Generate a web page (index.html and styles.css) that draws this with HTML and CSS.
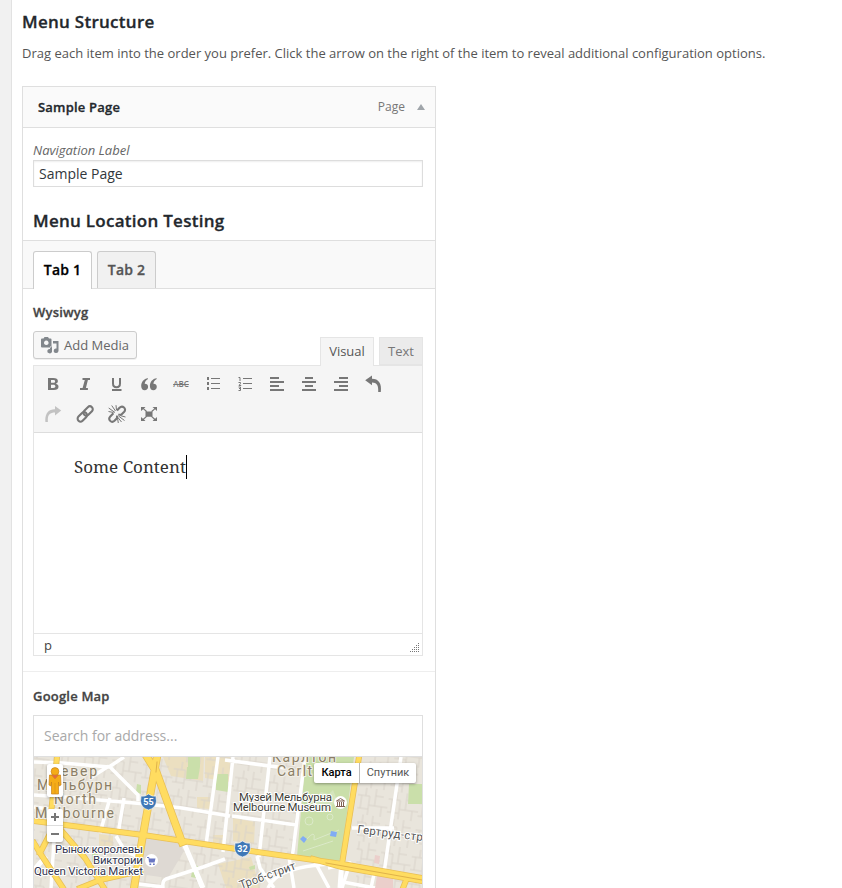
FILE: index.html
```html
<!DOCTYPE html>
<html lang="en">
<head>
<meta charset="utf-8">
<title>Menu Structure</title>
<link rel="stylesheet" href="styles.css">
</head>
<body>
<main class="panel">
  <h1 class="title">Menu Structure</h1>
  <p class="intro"><span>Drag each item into the order you prefer. Click the arrow on the right of the item to reveal additional configuration options.</span></p>
  <section class="item">
    <header class="item-bar"><strong>Sample Page</strong><span class="item-type">Page</span><i class="arrow"></i></header>
    <div class="nav-label">
      <label for="nav">Navigation Label</label>
      <input id="nav" type="text" value="Sample Page">
    </div>
    <h2 class="group-title">Menu Location Testing</h2>
    <div class="tabs"><a class="tab active">Tab 1</a><a class="tab">Tab 2</a></div>
    <div class="field wysiwyg">
      <div class="field-label">Wysiwyg</div>
      <div class="editor-top">
        <button class="media">
          <svg width="18" height="17" viewBox="0 0 18 17"><path fill="#82878c" fill-rule="evenodd" d="M1 1.500h1.500L3.500 0H7l1 1.500h1.500q1 0 1 1v7q0 1-1 1H1q-1 0-1-1v-7q0-1 1-1zM5.300 3.500a2.300 2.300 0 1 0 .01 0zM12 4h5.500v10a2.400 2.200 0 1 1-2-2.400V6.500H12zM9 12v-2.500h2v5.200a2.400 2.200 0 1 1-2-2.700z"/></svg>
          <span>Add Media</span>
        </button>
        <div class="modes"><a class="mode active">Visual</a><a class="mode">Text</a></div>
      </div>
      <div class="editor">
        <div class="toolbar">
          <span class="tool"><svg viewBox="0 0 20 20"><path fill-rule="evenodd" d="M5 4h5.200c3.200 0 4.700 1.100 4.700 3 0 1.400-.8 2.400-2.100 2.700 1.600.4 2.700 1.300 2.700 3 0 2.100-1.700 3.300-4.600 3.300H5zM8 6v2.800H10c1.500 0 2.100-.4 2.100-1.400S11.500 6 10 6zm0 4.700V14h2.200c1.500 0 2.200-.6 2.200-1.700s-.7-1.600-2.200-1.600z"/></svg></span>
          <span class="tool"><svg viewBox="0 0 20 20"><path d="M7.500 4H15v2h-2.100L10.900 14h2v2H5v-2h2.600L9.800 6H7.500z"/></svg></span>
          <span class="tool"><svg viewBox="0 0 20 20"><path d="M5 4h2v5.500q0 2.700 2.500 2.700t2.500-2.700V4h2v5.500q0 4.700-4.500 4.700T5 9.500zM5 15h9.500v2H5z"/></svg></span>
          <span class="tool"><svg viewBox="0 0 20 20"><path d="M9 5v-.8C4.700 4.700 2.200 8 2.200 12c0 2.800 1.400 4.200 3.500 4.200 1.900 0 3.400-1.400 3.400-3.400S7.700 9.600 5.700 9.700C6 7.700 6.900 6.200 9 5zM17.700 5v-.8c-4.300.5-6.800 3.800-6.800 7.800 0 2.800 1.400 4.200 3.500 4.200 1.900 0 3.400-1.400 3.400-3.400s-1.400-3.200-3.400-3.100C14.700 7.700 15.600 6.200 17.700 5z"/></svg></span>
          <span class="tool"><b class="strike">ABC</b></span>
          <span class="tool"><svg viewBox="0 0 20 20"><path d="M8 4h9v1H8zM8 9h9v1H8zM8 14h9v1H8zM4 3h2v3H4zM4 8h2v3H4zM4 13h2v3H4z"/></svg></span>
          <span class="tool"><svg viewBox="0 0 20 20"><path d="M8 4h9v1H8zM8 9h9v1H8zM8 14h9v1H8z"/><path class="line" d="M3.500 3.500h1.500v3.500M3.500 8.500h2v1L4 11.500h2.200M3.500 13h2v1.500H4h1.500V16.500h-2"/></svg></span>
          <span class="tool"><svg viewBox="0 0 20 20"><path d="M3 3h9v2H3zM3 7h14v2H3zM3 11h9v2H3zM3 15h14v2H3z"/></svg></span>
          <span class="tool"><svg viewBox="0 0 20 20"><path d="M6 3h8v2H6zM3 7h14v2H3zM6 11h8v2H6zM3 15h14v2H3z"/></svg></span>
          <span class="tool"><svg viewBox="0 0 20 20"><path d="M8 3h9v2H8zM3 7h14v2H3zM8 11h9v2H8zM3 15h14v2H3z"/></svg></span>
          <span class="tool"><svg viewBox="0 0 20 20"><path d="M9 1.500v3.200c6.500 0 10 4.700 8.800 13.300h-2.600c.5-6.600-1.500-9.500-6.200-9.500v2.800L2.200 6.300z"/></svg></span>
          <span class="tool faded"><svg viewBox="0 0 20 20"><path d="M12 2v3.200C5.500 5 1.600 9.800 2.400 18h2.500C4.300 11.500 6.500 8.600 12 8.600v2.900l6.200-5z"/></svg></span>
          <span class="tool"><svg viewBox="0 0 20 20"><g class="chain"><rect x="-5.400" y="-2.900" width="10.800" height="5.800" rx="2.900" transform="translate(13.100 7) rotate(-45)"/><rect x="-5.400" y="-2.900" width="10.800" height="5.800" rx="2.900" transform="translate(7.300 12.900) rotate(-45)"/></g></svg></span>
          <span class="tool"><svg viewBox="0 0 20 20"><g class="chain"><path d="M10 6.500l2.500-2.700c3-3 7.400.9 4.700 4l-2.700 2.700-3.200.2M6.400 9.300l-3.100 3.200c-2.800 3 1.100 7.200 4.200 4.300l2.400-2.500.2-2.700"/></g><path class="line" d="M1.700 4L8 8.500M4.700 1.500L8.500 7M9 1.200l.5 5M1.500 7.500l5 1M11.500 12l6 4.500M13 11.500l5.500 1.500M10.500 13l4 5M10.500 14l.8 5"/></svg></span>
          <span class="tool"><svg viewBox="0 0 20 20"><path d="M6.500 7.500h7v5.200h-7zM2 3h4.500L5 4.500l3 2.600-.8.8-3-2.600L2 7zM18 3v4l-1.900-1.800-3 2.700-.8-.8 3-2.600L13.500 3zM2 17v-4l2 1.700 3.200-2.700.8.8-3 2.700L6.500 17zM18 17h-4.500l1.500-1.500-2.900-2.700.8-.8 3.200 2.700 1.900-1.700z"/></svg></span>
        </div>
        <div class="content"><span class="written">Some Content</span></div>
        <div class="status"><span>p</span><svg width="10" height="10" viewBox="0 0 10 10"><path d="M9 0h1v1H9zM7 2h1v1H7zm2 0h1v1H9zM5 4h1v1H5zm2 0h1v1H7zm2 0h1v1H9zM3 6h1v1H3zm2 0h1v1H5zm2 0h1v1H7zm2 0h1v1H9zM1 8h1v1H1zm2 0h1v1H3zm2 0h1v1H5zm2 0h1v1H7zm2 0h1v1H9z"/></svg></div>
      </div>
    </div>
    <div class="field map-field">
      <div class="field-label">Google Map</div>
      <div class="map-box">
        <input class="search" type="text" placeholder="Search for address...">
        <div class="map">
          <svg class="tiles" width="388" height="131" viewBox="34 757 388 131">
            <defs>
              <pattern id="lots" width="31" height="27" patternUnits="userSpaceOnUse" patternTransform="rotate(8)"><path d="M0 8h12v9h19M8 0v8M18 0v17M25 17v10M12 17v10M18 7h8M0 21h12M4 8v13" fill="none" stroke="#d9d3ca" stroke-width="1"/></pattern>
            </defs>
            <path fill="#e9e5dc" d="M34 757h388v131H34z"/>
            <path fill="#ebdfc0" d="M163 757h41l-1 24-32-5zM205 757h25v25l-25-4zM197 797h13v12l-13-1zM233 818l22 4-1 22-21-3zM213 835h10v9h-10zM218 864l33-7 9 31h-34zM99 834l14 2v10h-14z"/>
            <path fill="url(#lots)" d="M34 757h269l-8 98-30 33H34zM358 757h64v131h-66z"/>
            <path fill="#ded9d3" d="M145 838l33 5 6 8-16 27-29-4z"/>
            <path fill="#cadfaa" d="M188 757h12v10h-12zM187 767h13l-2 12h-12zM137 784l4 1v9l-5-2zM306 757h48l-13 104-44-5zM409 784h13v20h-14zM216 774h12v18l-12-2zM92 848h6v14h-6zM193 865l5 1-2 12-5-1zM249 867l6-2v4l-5 1z"/>
            <path d="M310 801l11-9 8 2 4-4 4 10-8 8-13-1z" fill="#d4e5bd"/>
            <g fill="none" stroke="#dbe9c8"><circle cx="309" cy="821" r="4"/><circle cx="330" cy="817" r="3"/><path d="M306 840q10-12 8 0l25-10M303 851l30-10"/></g>
            <path fill="#ebcfcb" d="M375 855l5 1-1 8-5-1zM377 876h16v12h-18z"/>
            <g fill="none" stroke="#fff" stroke-width="3.500" stroke-linejoin="round">
              <path d="M34 762l29 1 46 4 15-10M109 766l29 29v6M109 766l-19 12M34 795l30 2 82 7 36 4 48 8M124 798l-6 36M110 798l-10 35M210 815l-4 30M218 757l-12 88M233 757l-10 95M225 760l60 8M232 816l64 9M270 757l-11 100M305 757l-13 102M182 838l20 50M34 807l22 3-5 78M116 836l9 15 15 7M257 856l3 12 14 20M289 857l5 31M328 868l22-5-8 25M315 862l14 26M268 888q8-21 62-24M139 884l24 3q-1-6 3-8l37-12 22-8M352 828h42M401 757l-17 116M374 874l-3 14M343 882l32 6"/>
              <path stroke-width="5" d="M183 841l20 47M34 870l12-14M342 860l-2 28"/>
            </g>
            <g fill="none" stroke-linejoin="round" stroke-linecap="square">
              <g stroke="#e8bf56"><path stroke-width="6" d="M57 757l-7 66M34 821l109 14 87 13 112 16 80 14M34 843l6 10 23 35M55 824l-15 29M60 829l25 29 19 30M80 888l20-8 40-9M313 859l29 8 80 14M407 878l-4 10M359 757l-17 107"/><path stroke-width="8" d="M157 757l-14 78-9 53M147 757l8 13M155 768l27 74"/></g>
              <g stroke="#ffdc60"><path stroke-width="4.500" d="M57 757l-7 66M34 821l109 14 87 13 112 16 80 14M34 843l6 10 23 35M55 824l-15 29M60 829l25 29 19 30M80 888l20-8 40-9M313 859l29 8 80 14M407 878l-4 10M359 757l-17 107"/><path stroke-width="6.500" d="M157 757l-14 78-9 53M147 757l8 13M155 768l27 74"/></g>
              <path d="M157 762l-1 10M326 863l96 17" stroke="#e0b24a"/>
            </g>
            <path fill="#80acf4" d="M303 836l4 3-3 4-4-4zM331 831l6 1-1 5-6-1z"/>
            <g class="district">
              <text x="61" y="776" textLength="36">евер</text><text x="37" y="790" textLength="75">Мельбурн</text><text x="54" y="804" textLength="42">North</text><text x="35" y="818" textLength="79">Melbourne</text>
              <text x="272" y="762" textLength="64">Карлтон</text><text x="277" y="776" textLength="35">Carlt</text>
            </g>
            <g class="place">
              <text x="55" y="853" textLength="88">Рынок королевы</text><text x="93" y="864" textLength="50">Виктории</text><text x="34" y="875" textLength="109">Queen Victoria Market</text>
              <text class="museum" x="239" y="801" textLength="93">Музей Мельбурна</text><text class="museum" x="233" y="811" textLength="98">Melbourne Museum</text>
              <text class="street" transform="translate(357 833) rotate(7)" textLength="66">Гертруд-стр</text><text class="street" transform="translate(241 889) rotate(-20)" textLength="59">Троб-стрит</text>
            </g>
            <circle cx="151.500" cy="860.500" r="6.500" fill="#fff"/><path d="M147 857h2l.5 1.500h6l-1 4h-5.500L148.500 858H147zM149.500 863.500h1.700v1.500h-1.700zm3.500 0h1.700v1.500H153z" fill="#6977c3"/>
            <circle cx="340.500" cy="802.500" r="6.500" fill="#fff"/><path d="M336.500 801l4-2.500 4 2.500zM337.500 802v4M339.500 802v4M341.500 802v4M343.500 802v4M336 806.500h9" fill="none" stroke="#806052"/>
            <g class="shield"><path id="shield" d="M141 796q4 1 7.500-2 3.500 3 7.500 2 0 3 .5 5-.5 7-8 9-7.500-2-8-9 .5-2 .5-5z"/><use href="#shield" x="94" y="47"/><text x="148.500" y="805">55</text><text x="242.500" y="852">32</text></g>
          </svg>
          <div class="pegman"><svg width="16" height="28" viewBox="0 0 16 28"><g fill="#f5ac17" stroke="#c9831a" stroke-width=".7"><path d="M2.500 8h11l.5 10-2 1-.5-4v12h-7V15L4 19l-2-1z"/><circle cx="8" cy="4.500" r="3.900"/></g><path d="M4.500 8h7L8 12zM8 16v11" fill="#e46943" stroke="#d28a15" stroke-width=".5"/></svg></div>
          <div class="zoom"><span class="plus"></span><span></span></div>
          <div class="map-types"><b>Карта</b><span>Спутник</span></div>
        </div>
      </div>
    </div>
  </section>
</main>
</body>
</html>
```

FILE: styles.css
```css
* { box-sizing: border-box; }
html { background: #f1f1f1; }
body { margin: 0; height: 888px; overflow: hidden; color: #444; font: 13px/20px "Open Sans", sans-serif; }
.panel { height: 888px; margin-left: 11px; padding: 11px 0 0 10px; border-left: 1px solid #e2e2e2; background: #fff; overflow: hidden; }
.title, .group-title { margin: 0; color: #23282d; font-size: 17px; line-height: 22px; font-weight: 600; letter-spacing: .27px; }
.title, .group-title, .item-bar strong, .tab, .field-label { -webkit-text-stroke: .3px; }
.intro { margin: 10px 0 23px; white-space: nowrap; color: #555; }
.item { width: 414px; height: 830px; border: 1px solid #dfdfdf; }
.item-bar { display: flex; align-items: center; height: 41px; padding: 0 10px 0 15px; border-bottom: 1px solid #dfdfdf; background: #fafafa; }
.item-bar strong { flex: 1; color: #23282d; font-weight: 600; letter-spacing: .2px; }
.item-type { color: #777; font-size: 12px; }
.arrow { margin-left: 12px; border: 4px solid transparent; border-top: 0; border-bottom: 6px solid #a0a5aa; }
.nav-label { padding: 12px 12px 0 10px; }
.nav-label label { display: block; font-style: italic; color: #666; }
input { display: block; width: 100%; border: 1px solid #ddd; background: #fff; color: #32373c; font: 14px "Open Sans", sans-serif; outline: 0; }
.nav-label input { height: 27px; padding: 2px 5px 3px; box-shadow: inset 0 1px 2px rgba(0,0,0,.07); }
.group-title { margin: 23px 0 8px 10px; }
.tabs { display: flex; align-items: flex-end; gap: 5px; height: 49px; padding-left: 10px; border-top: 1px solid #dfdfdf; border-bottom: 1px solid #dfdfdf; background: #f9f9f9; }
.tab { height: 37px; width: 59px; border: 1px solid #ccc; border-bottom: 0; border-radius: 3px 3px 0 0; background: #f1f1f1; color: #555; font-size: 14px; line-height: 35px; font-weight: 600; text-align: center; letter-spacing: .2px; }
.tab.active { height: 38px; margin-bottom: -1px; background: #fff; color: #000; }
.field { padding: 0 12px 0 10px; }
.field-label { padding-top: 13px; height: 42px; color: #444; font-weight: 600; letter-spacing: .2px; }
.wysiwyg { height: 383px; border-bottom: 1px solid #eee; }
.editor-top { display: flex; justify-content: space-between; height: 34px; }
.media { display: flex; align-items: center; gap: 5px; width: 104px; height: 28px; padding: 0 0 0 7px; border: 1px solid #ccc; border-radius: 3px; background: #f7f7f7; color: #666; font: 13px "Open Sans", sans-serif; white-space: nowrap; box-shadow: 0 1px 0 rgba(0,0,0,.06); }
.modes { display: flex; gap: 5px; padding-top: 6px; }
.mode { height: 28px; width: 44px; border: 1px solid #e5e5e5; background: #ebebeb; color: #777; line-height: 27px; text-align: center; }
.mode.active { position: relative; height: 29px; width: 54px; border-bottom: 0; background: #f5f5f5; color: #555; }
.editor { height: 291px; border: 1px solid #e5e5e5; }
.toolbar { display: flex; flex-wrap: wrap; align-content: flex-start; height: 67px; padding: 3px 3px 0; border-bottom: 1px solid #ddd; background: #f5f5f5; }
.tool { display: flex; align-items: center; justify-content: center; width: 32px; height: 30px; }
.tool svg { width: 20px; height: 20px; fill: #777; }
.tool .line { fill: none; stroke: #777; stroke-width: 1; }
.tool .chain { fill: none; stroke: #777; stroke-width: 2.1; }
.tool.faded { opacity: .4; }
.strike { color: #777; font-size: 8px; line-height: 10px; font-weight: 600; text-decoration: line-through; }
.content { height: 200px; padding: 22px 40px; color: #333; font: 17px/24px "Noto Serif", "DejaVu Serif Condensed", serif; }
.written { display: inline-block; height: 24px; line-height: 24px; border-right: 1px solid #000; white-space: nowrap; }
.status { display: flex; justify-content: space-between; align-items: center; height: 23px; padding: 0 3px 0 10px; border-top: 1px solid #e5e5e5; }
.status span { height: 20px; }
.status svg { margin-top: 6px; fill: #777; }
.map-field .field-label { padding-top: 14px; height: 43px; }
.map-box { height: 190px; border: 1px solid #dfdfdf; border-bottom: 0; }
.search { height: 41px; padding: 0 10px 2px; border: 0; border-bottom: 1px solid #dfdfdf; }
.search::placeholder { color: #a9a9a9; opacity: 1; }
.map { position: relative; font-family: Roboto, sans-serif; }
.tiles { display: block; }
.district { fill: #8b7e65; stroke: #f3f0e8; stroke-width: 2px; paint-order: stroke; font-size: 14px; }
.place { fill: #333650; stroke: #fff; stroke-width: 2px; paint-order: stroke; font-size: 11.5px; }
.museum { fill: #403e38; }
.street { fill: #555; }
.shield { fill: #3f78b7; stroke: #fff; stroke-width: .6px; }
.shield text { fill: #fff; stroke: none; font-size: 9px; font-weight: 700; text-anchor: middle; }
.pegman, .zoom, .map-types { position: absolute; background: #fff; border-radius: 2px; box-shadow: 0 1px 3px rgba(0,0,0,.35); }
.pegman { left: 13px; top: 7px; width: 16px; height: 33px; padding-top: 3px; }
.zoom { left: 13px; top: 52px; width: 16px; height: 33px; }
.zoom span { position: relative; display: grid; place-items: center; height: 16px; }
.zoom span::before, .zoom .plus::after { content: ""; position: absolute; width: 8px; height: 2px; background: #777; }
.zoom .plus { height: 17px; border-bottom: 1px solid #ddd; }
.zoom .plus::after { width: 2px; height: 8px; }
.map-types { display: flex; top: 6px; right: 6px; height: 20px; font-size: 11px; line-height: 19px; color: #565656; }
.map-types b { width: 46px; text-align: center; color: #000; font-weight: 500; border-right: 1px solid #bbb; }
.map-types span { width: 56px; text-align: center; }
```
